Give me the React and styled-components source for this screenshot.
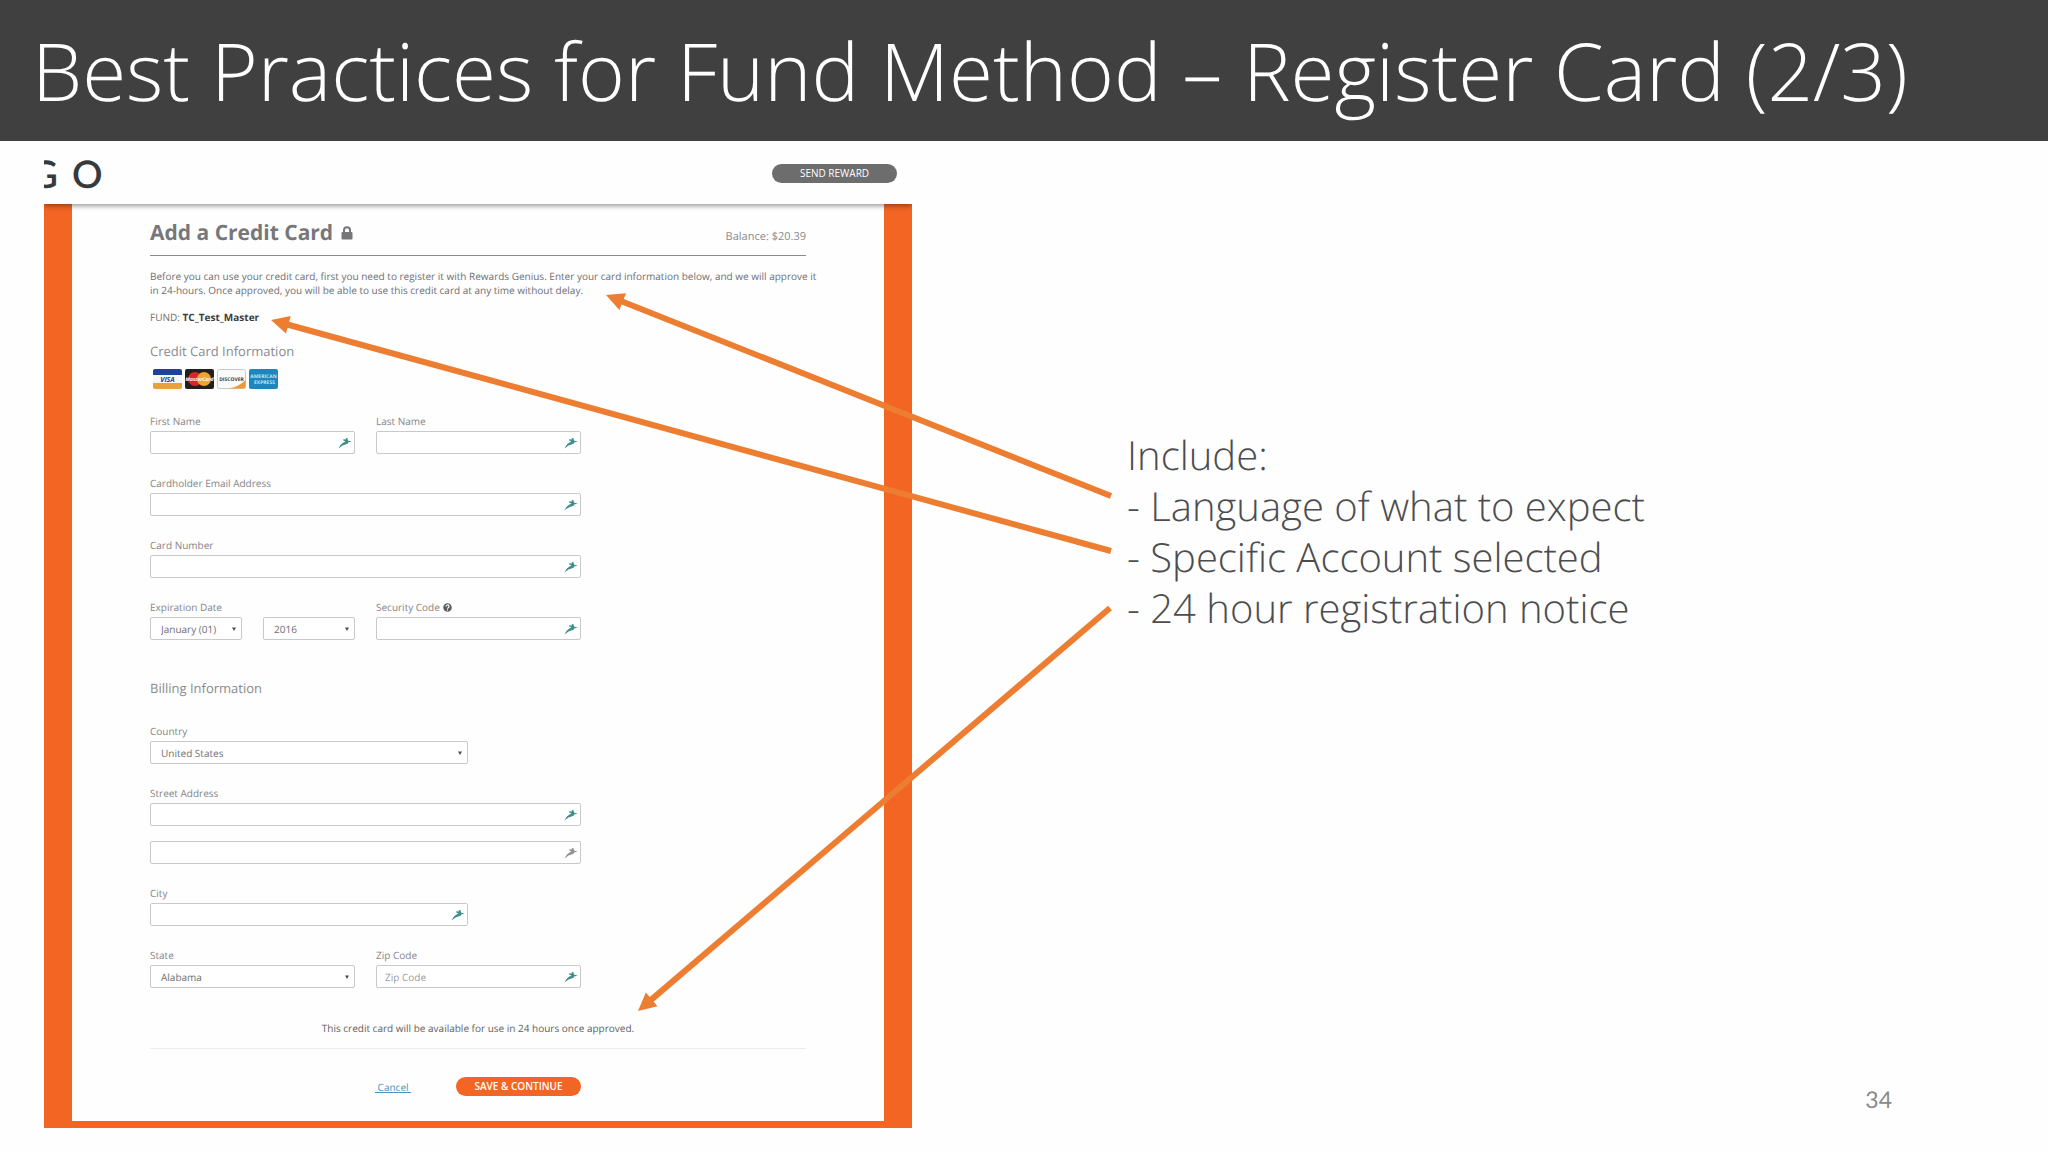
import React from "react";
import styled, { createGlobalStyle } from "styled-components";

const GlobalStyle = createGlobalStyle`
  * {
    box-sizing: border-box;
  }
  body {
    margin: 0;
    background: #fefefe;
    font-family: "Open Sans", "Noto Sans", sans-serif;
    text-rendering: geometricPrecision;
  }
  h1, h2, h3, p {
    margin: 0;
  }
`;

const Slide = styled.div`
  display: flex;
  flex-direction: column;
  min-height: 100vh;
`;

const TitleBar = styled.header`
  padding: 16px 32px 15px;
  background: #404040;
`;

const SlideTitle = styled.h1`
  color: #fff;
  font-size: 80px;
  font-weight: 300;
  line-height: 110px;
  white-space: nowrap;
`;

const Body = styled.main`
  position: relative;
  flex: 1;
  display: grid;
  grid-template-columns: minmax(0, 868fr) minmax(0, 921fr);
  column-gap: 215px;
  align-items: start;
  padding: 0 0 24px 44px;
`;

const Site = styled.section`
  padding-bottom: 7px;
  background: #f26522;
`;

const SiteHeader = styled.div`
  position: relative;
  display: flex;
  align-items: center;
  justify-content: space-between;
  height: 63px;
  padding: 2px 15px 0 0;
  background: #fefefe;
  box-shadow: 0 2px 5px rgba(0, 0, 0, 0.4);
  clip-path: inset(0 0 -8px 0);
`;

const Logo = styled.div`
  display: flex;
  gap: 14px;
  color: #373a3d;
  font-family: Lato, sans-serif;
  font-size: 38px;
  font-weight: 600;
  line-height: 40px;
`;

const ClippedLetter = styled.span`
  display: flex;
  justify-content: flex-end;
  width: 14px;
  overflow: hidden;
`;

const PillButton = styled.button`
  width: 125px;
  height: 19px;
  padding: 0;
  border: 0;
  border-radius: 10px;
  background: ${(props) => (props.$primary ? "#f26522" : "#6d6d6d")};
  color: #fff;
  font-family: inherit;
  font-size: 10px;
  font-weight: ${(props) => (props.$primary ? 600 : 400)};
  line-height: 19px;
`;

const Panel = styled.form`
  margin: 0 28px;
  padding: 15px 78px 25px;
  background: #fefefe;
  color: #6f6f73;
  font-size: 10px;
  line-height: 14px;
`;

const PanelHead = styled.div`
  display: flex;
  align-items: baseline;
  justify-content: space-between;
  padding-bottom: 8px;
  border-bottom: 1px solid #8a8a8c;
`;

const PanelTitle = styled.h2`
  display: flex;
  align-items: center;
  gap: 8px;
  color: #77777a;
  font-size: 21px;
  font-weight: 700;
  line-height: 28px;
`;

const Balance = styled.span`
  color: #8a8a8d;
  font-size: 11px;
`;

const Intro = styled.p`
  margin-top: 13px;
  white-space: nowrap;
`;

const Fund = styled.p`
  margin-top: 13px;
  strong {
    color: #3e3e40;
  }
`;

const GroupTitle = styled.h3`
  margin-top: ${(props) => props.$gap}px;
  color: #8a8a8d;
  font-size: 13px;
  font-weight: 400;
  line-height: 20px;
`;

const CardRow = styled.div`
  display: flex;
  gap: 3px;
  margin: 8px 0 25px;
  padding-left: 3px;
  svg {
    display: block;
  }
`;

const Fields = styled.div`
  display: grid;
  grid-template-columns: repeat(2, minmax(0, 1fr));
  gap: 22px 21px;
  max-width: 431px;
  margin-top: ${(props) => props.$top || 0}px;
`;

const FieldBox = styled.div`
  grid-column: ${(props) => (props.$wide ? "1 / -1" : "auto")};
  max-width: ${(props) => (props.$medium ? "318px" : "none")};
`;

const Label = styled.label`
  display: flex;
  align-items: center;
  gap: 3px;
  margin-bottom: 3px;
  color: #858588;
`;

const Control = styled.div`
  position: relative;
  flex: 1;
`;

const Pair = styled.div`
  display: flex;
  gap: 21px;
`;

const Stack = styled.div`
  display: grid;
  gap: 15px;
`;

const Input = styled.input`
  display: block;
  width: 100%;
  height: 23px;
  padding: 0 24px 0 8px;
  border: 1px solid #c9c8cd;
  border-radius: 2px;
  background: #fff;
  color: #6f6f73;
  font-family: inherit;
  font-size: 10px;
  text-rendering: inherit;
  &::placeholder {
    color: #9b9b9f;
    opacity: 1;
  }
`;

const Select = styled.select`
  display: block;
  width: 100%;
  height: 23px;
  padding: 0 16px 0 10px;
  border: 1px solid #c9c8cd;
  border-radius: 2px;
  background: #fff;
  color: #6f6f73;
  font-family: inherit;
  font-size: 10px;
  text-rendering: inherit;
  appearance: none;
`;

const ControlIcon = styled.svg`
  position: absolute;
  top: 0;
  bottom: 0;
  right: ${(props) => props.$right}px;
  margin: auto 0;
  pointer-events: none;
`;

const Notice = styled.p`
  margin: 33px 0 13px;
  color: #5f5f63;
  text-align: center;
`;

const Actions = styled.div`
  display: flex;
  align-items: center;
  justify-content: space-between;
  max-width: 431px;
  padding: 28px 0 0 225px;
`;

const Divider = styled.hr`
  margin: 0;
  border: 0;
  border-top: 1px solid #ececf0;
`;

const CancelLink = styled.a`
  color: #4b93bd;
  white-space: pre;
`;

const Notes = styled.div`
  padding-top: 288px;
  color: #4d4d50;
  font-size: 40px;
  font-weight: 300;
  line-height: 51px;
`;

const Arrows = styled.svg`
  position: absolute;
  inset: 0;
  width: 100%;
  height: 100%;
  pointer-events: none;
`;

const PageNumber = styled.span`
  position: absolute;
  right: 156px;
  bottom: 39px;
  color: #898989;
  font-family: Lato, sans-serif;
  font-size: 23px;
  line-height: 28px;
`;

function LockIcon() {
  return (
    <svg width="12" height="14" viewBox="0 0 12 14" aria-hidden="true">
      <path d="M3 7V4.2a3 3 0 0 1 6 0V7" fill="none" stroke="#77777a" strokeWidth="2" />
      <rect x="0.5" y="6" width="11" height="7.5" rx="1" fill="#77777a" />
    </svg>
  );
}

function HelpIcon() {
  return (
    <svg width="9" height="9" viewBox="0 0 18 18" aria-hidden="true">
      <circle cx="9" cy="9" r="8.5" fill="#5b5b5e" />
      <path d="M6 7a3 3 0 1 1 4.4 2.6Q9 10.3 9 11.5" fill="none" stroke="#fff" strokeWidth="2.4" />
      <circle cx="9" cy="14" r="1.4" fill="#fff" />
    </svg>
  );
}

function FillIcon({ muted }) {
  return (
    <ControlIcon $right={3} width="14" height="12" viewBox="0 0 14 12" aria-hidden="true">
      <path
        d="M0.500 11.500C2 8 4 6 7.400 4.500L5 3.200 5.400 2.300 8 2.600 7.600 1.500 9.200 0.800 10.200 3.800 13.800 4.600 10.200 5.400 9.600 6.800 6 8C4 8.700 2.400 9.900 0.500 11.500Z"
        fill={muted ? "#8f9196" : "#3f8f8d"}
      />
    </ControlIcon>
  );
}

function Caret() {
  return (
    <ControlIcon $right={6} width="4" height="4" viewBox="0 0 4 4" aria-hidden="true">
      <path d="M0 0.500h4L2 4Z" fill="#4b4b4e" />
    </ControlIcon>
  );
}

function TextField({ id, label, help, placeholder, wide, medium }) {
  return (
    <FieldBox $wide={wide} $medium={medium}>
      <Label htmlFor={id}>
        {label}
        {help && <HelpIcon />}
      </Label>
      <Control>
        <Input id={id} type="text" placeholder={placeholder} />
        <FillIcon />
      </Control>
    </FieldBox>
  );
}

function Dropdown({ id, value, name }) {
  return (
    <Control>
      <Select id={id} aria-label={name} defaultValue={value}>
        <option>{value}</option>
      </Select>
      <Caret />
    </Control>
  );
}

function CardLogos() {
  const word = {
    textAnchor: "middle",
    fontFamily: "Open Sans, sans-serif",
    fontWeight: 700,
  };
  return (
    <CardRow>
      <svg width="29" height="20" viewBox="0 0 29 20">
        <rect width="29" height="20" rx="2" fill="#f6f6f8" />
        <path d="M0 6V2a2 2 0 0 1 2-2h25a2 2 0 0 1 2 2v4Z" fill="#1f419b" />
        <path d="M0 14h29v4a2 2 0 0 1-2 2H2a2 2 0 0 1-2-2Z" fill="#e9a23b" />
        <text {...word} x="14.5" y="13" fontSize="7" fontStyle="italic" fill="#23408f">VISA</text>
      </svg>
      <svg width="29" height="20" viewBox="0 0 29 20">
        <rect width="29" height="20" rx="2" fill="#22201f" />
        <circle cx="10" cy="10" r="7" fill="#d5272b" />
        <circle cx="19" cy="10" r="7" fill="#efa42c" />
        <text {...word} x="14.5" y="12" fontSize="5" fontStyle="italic" fill="#fff">MasterCard</text>
      </svg>
      <svg width="29" height="20" viewBox="0 0 29 20">
        <rect x="0.5" y="0.5" width="28" height="19" rx="2" fill="#fafafa" stroke="#c9c9cc" />
        <path d="M11 19.5Q22 18 28.5 11v6.500a2 2 0 0 1-2 2Z" fill="#ee9a3a" />
        <text {...word} x="14.5" y="12" fontSize="5" fill="#3b3b3d">DISCOVER</text>
      </svg>
      <svg width="29" height="20" viewBox="0 0 29 20">
        <rect width="29" height="20" rx="2" fill="#1f86bd" />
        <text {...word} x="14.5" y="9" fontSize="5" fill="#bfe2f3">AMERICAN</text>
        <text {...word} x="15.5" y="15" fontSize="5" fill="#bfe2f3">EXPRESS</text>
      </svg>
    </CardRow>
  );
}

// tail and tip of each arrow, in the space below the title bar
const ARROWS = [
  { from: [1111, 355], to: [606, 154] },
  { from: [1111, 410], to: [271, 179] },
  { from: [1110, 467], to: [638, 870] },
];

function Arrow({ from, to }) {
  const length = Math.hypot(to[0] - from[0], to[1] - from[1]);
  const angle = (Math.atan2(to[1] - from[1], to[0] - from[0]) * 180) / Math.PI;
  return (
    <g transform={`translate(${from[0]} ${from[1]}) rotate(${angle})`} fill="#ed7d31">
      <rect x="0" y="-3" width={length - 16} height="6" />
      <path d={`M${length} 0l-18 -9v18Z`} />
    </g>
  );
}

function CardForm() {
  return (
    <Panel onSubmit={(e) => e.preventDefault()}>
      <PanelHead>
        <PanelTitle>
          Add a Credit Card <LockIcon />
        </PanelTitle>
        <Balance>Balance: $20.39</Balance>
      </PanelHead>
      <Intro>
        Before you can use your credit card, first you need to register it with
        Rewards Genius. Enter your card information below, and we will approve it
        <br />
        in 24-hours. Once approved, you will be able to use this credit card at
        any time without delay.
      </Intro>
      <Fund>
        FUND: <strong>TC_Test_Master</strong>
      </Fund>

      <GroupTitle $gap={17}>Credit Card Information</GroupTitle>
      <CardLogos />
      <Fields>
        <TextField id="first" label="First Name" />
        <TextField id="last" label="Last Name" />
        <TextField id="email" label="Cardholder Email Address" wide />
        <TextField id="number" label="Card Number" wide />
        <FieldBox>
          <Label htmlFor="month">Expiration Date</Label>
          <Pair>
            <Dropdown id="month" value="January (01)" />
            <Dropdown id="year" name="Expiration year" value="2016" />
          </Pair>
        </FieldBox>
        <TextField id="code" label="Security Code" help />
      </Fields>

      <GroupTitle $gap={38}>Billing Information</GroupTitle>
      <Fields $top={26}>
        <FieldBox $wide $medium>
          <Label htmlFor="country">Country</Label>
          <Dropdown id="country" value="United States" />
        </FieldBox>
        <FieldBox $wide>
          <Label htmlFor="street">Street Address</Label>
          <Stack>
            <Control>
              <Input id="street" type="text" />
              <FillIcon />
            </Control>
            <Control>
              <Input type="text" aria-label="Street Address line 2" />
              <FillIcon muted />
            </Control>
          </Stack>
        </FieldBox>
        <TextField id="city" label="City" wide medium />
        <FieldBox>
          <Label htmlFor="state">State</Label>
          <Dropdown id="state" value="Alabama" />
        </FieldBox>
        <TextField id="zip" label="Zip Code" placeholder="Zip Code" />
      </Fields>

      <Notice>This credit card will be available for use in 24 hours once approved.</Notice>
      <Divider />
      <Actions>
        <CancelLink href="#cancel"> Cancel </CancelLink>
        <PillButton type="submit" $primary>SAVE &amp; CONTINUE</PillButton>
      </Actions>
    </Panel>
  );
}

function App() {
  return (
    <Slide>
      <GlobalStyle />
      <TitleBar>
        <SlideTitle>Best Practices for Fund Method – Register Card (2/3)</SlideTitle>
      </TitleBar>
      <Body>
        <Site>
          <SiteHeader>
            <Logo>
              <ClippedLetter>G</ClippedLetter>
              <span>O</span>
            </Logo>
            <PillButton type="button">SEND REWARD</PillButton>
          </SiteHeader>
          <CardForm />
        </Site>
        <Notes>
          <p>Include:</p>
          <p>- Language of what to expect</p>
          <p>- Specific Account selected</p>
          <p>- 24 hour registration notice</p>
        </Notes>
        <Arrows viewBox="0 0 2048 1011" preserveAspectRatio="none" aria-hidden="true">
          {ARROWS.map((arrow) => (
            <Arrow key={arrow.from[1]} {...arrow} />
          ))}
        </Arrows>
        <PageNumber>34</PageNumber>
      </Body>
    </Slide>
  );
}

export default App;
